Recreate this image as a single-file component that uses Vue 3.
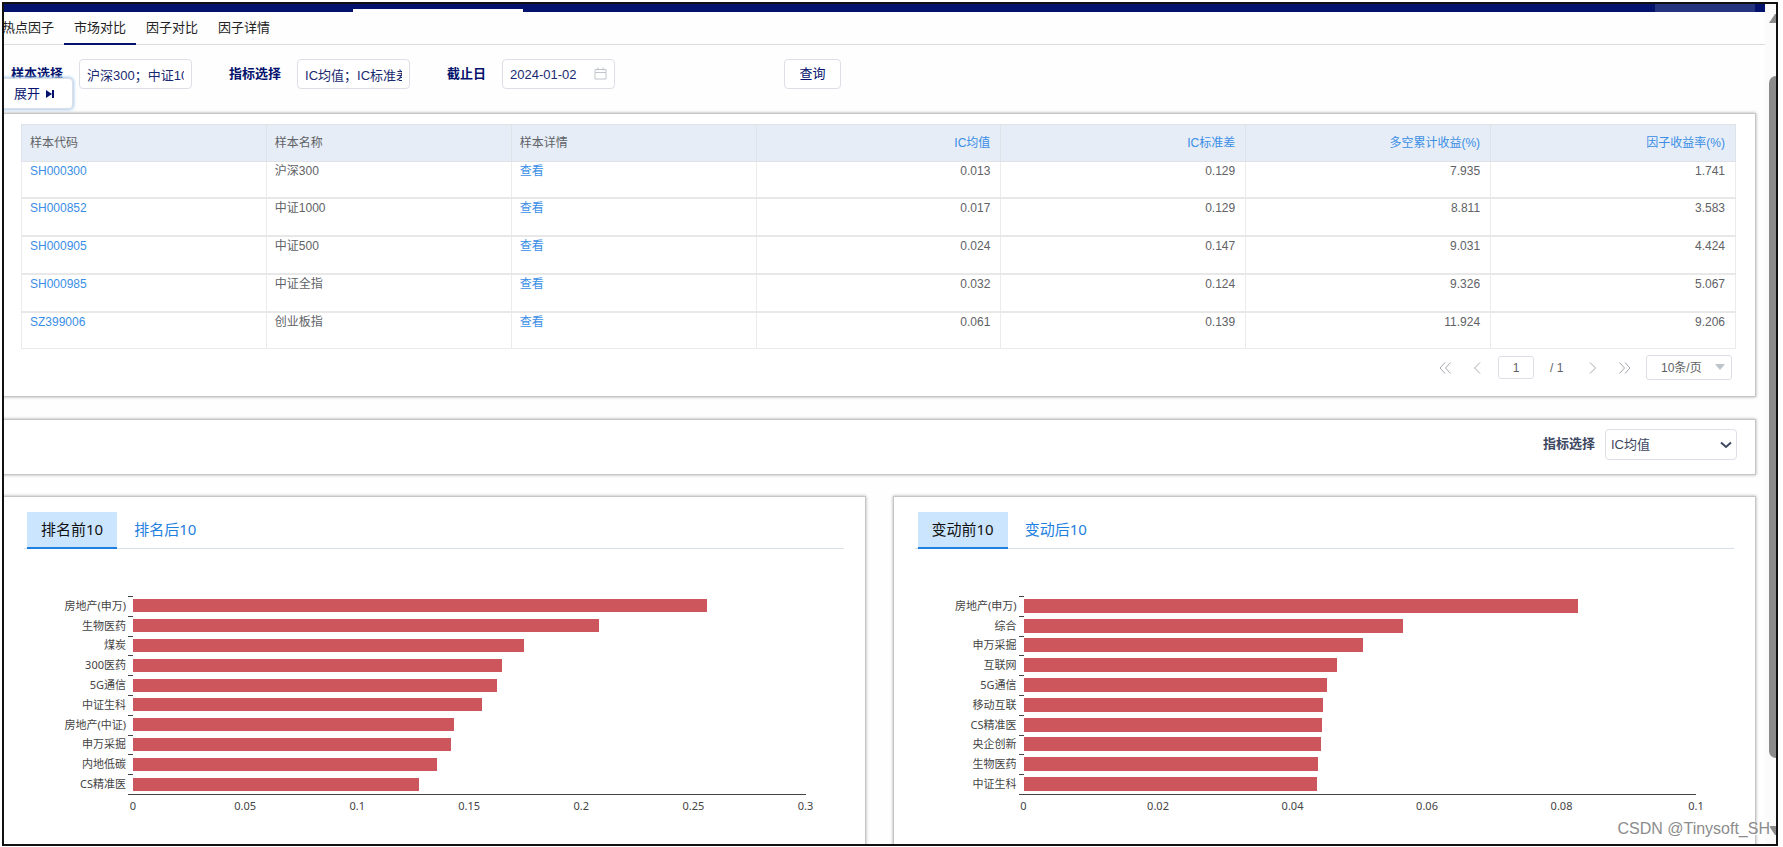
<script setup>
import { ref } from 'vue'

const navTabs = ['热点因子', '市场对比', '因子对比', '因子详情']
const activeNav = ref(1)

const samples = ref('沪深300；中证1000；中证500；中证全指；创业板指')
const metrics = ref('IC均值；IC标准差；多空累计收益；因子收益率')
const endDate = ref('2024-01-02')
const metric = ref('IC均值')
const page = ref('1')
const pageSize = ref('10')

const headers = [
  { text: '样本代码' },
  { text: '样本名称' },
  { text: '样本详情' },
  { text: 'IC均值', num: true },
  { text: 'IC标准差', num: true },
  { text: '多空累计收益(%)', num: true },
  { text: '因子收益率(%)', num: true },
]

const rows = [
  { code: 'SH000300', name: '沪深300', values: ['0.013', '0.129', '7.935', '1.741'] },
  { code: 'SH000852', name: '中证1000', values: ['0.017', '0.129', '8.811', '3.583'] },
  { code: 'SH000905', name: '中证500', values: ['0.024', '0.147', '9.031', '4.424'] },
  { code: 'SH000985', name: '中证全指', values: ['0.032', '0.124', '9.326', '5.067'] },
  { code: 'SZ399006', name: '创业板指', values: ['0.061', '0.139', '11.924', '9.206'] },
]

const charts = [
  {
    id: 'rank',
    tabs: ['排名前10', '排名后10'],
    max: 0.3,
    ticks: ['0', '0.05', '0.1', '0.15', '0.2', '0.25', '0.3'],
    bars: [
      ['房地产(申万)', 0.256],
      ['生物医药', 0.2077],
      ['煤炭', 0.1746],
      ['300医药', 0.1646],
      ['5G通信', 0.1623],
      ['中证生科', 0.1558],
      ['房地产(中证)', 0.1431],
      ['申万采掘', 0.1419],
      ['内地低碳', 0.1356],
      ['CS精准医', 0.1275],
    ],
  },
  {
    id: 'change',
    tabs: ['变动前10', '变动后10'],
    max: 0.1,
    ticks: ['0', '0.02', '0.04', '0.06', '0.08', '0.1'],
    bars: [
      ['房地产(申万)', 0.0824],
      ['综合', 0.0565],
      ['申万采掘', 0.0505],
      ['互联网', 0.0466],
      ['5G通信', 0.0452],
      ['移动互联', 0.0445],
      ['CS精准医', 0.0444],
      ['央企创新', 0.0442],
      ['生物医药', 0.0438],
      ['中证生科', 0.0436],
    ],
  },
]
</script>

<template>
  <div class="frame">
    <div class="content">
      <div class="topbar">
        <span class="topbar-tab"></span>
        <span class="topbar-user"></span>
      </div>

      <nav class="nav">
        <a
          v-for="(t, i) in navTabs"
          :key="t"
          href="#"
          class="nav-item"
          :class="{ active: i === activeNav }"
          @click.prevent="activeNav = i"
        >{{ t }}</a>
      </nav>

      <form class="filters" @submit.prevent>
        <div class="field">
          <label for="samples">样本选择</label>
          <input id="samples" v-model="samples" type="text" class="box" />
        </div>
        <div class="field">
          <label for="metrics">指标选择</label>
          <input id="metrics" v-model="metrics" type="text" class="box" />
        </div>
        <div class="field">
          <label for="end-date">截止日</label>
          <div class="date">
            <input id="end-date" v-model="endDate" type="text" class="box" />
            <svg class="calendar" width="13" height="13" viewBox="0 0 13 13" aria-hidden="true">
              <path d="M1 2.5h11v9.5h-11zM1 5.5h11M4 0.5v3M9 0.5v3" fill="none" stroke="#c0c4cc" />
            </svg>
          </div>
        </div>
        <button type="submit" class="query">查询</button>
        <button type="button" class="expand">
          展开
          <svg width="9" height="8" viewBox="0 0 9 8" aria-hidden="true">
            <path d="M0 0l6 4l-6 4zM6 0h2v8h-2z" fill="#03126c" />
          </svg>
        </button>
      </form>

      <section class="panel table-panel">
        <table>
          <thead>
            <tr>
              <th v-for="h in headers" :key="h.text" scope="col" :class="{ num: h.num }">{{ h.text }}</th>
            </tr>
          </thead>
          <tbody>
            <tr v-for="r in rows" :key="r.code">
              <td><a href="#" @click.prevent>{{ r.code }}</a></td>
              <td>{{ r.name }}</td>
              <td><a href="#" @click.prevent>查看</a></td>
              <td v-for="(v, i) in r.values" :key="i" class="num">{{ v }}</td>
            </tr>
          </tbody>
        </table>

        <div class="pager">
          <button type="button" aria-label="第一页" class="arrow">
            <svg width="12" height="12" viewBox="0 0 12 12"><path d="M6 0.5l-5 5.5l5 5.5M11.5 0.5l-5 5.5l5 5.5" /></svg>
          </button>
          <button type="button" aria-label="上一页" class="arrow near">
            <svg width="12" height="12" viewBox="0 0 12 12"><path d="M9 0.5l-5.5 5.5l5.5 5.5" /></svg>
          </button>
          <input v-model="page" type="text" class="page-no" aria-label="页码" />
          <span class="total">/ 1</span>
          <button type="button" aria-label="下一页" class="arrow">
            <svg width="12" height="12" viewBox="0 0 12 12"><path d="M3 0.5l5.5 5.5l-5.5 5.5" /></svg>
          </button>
          <button type="button" aria-label="最后一页" class="arrow near">
            <svg width="12" height="12" viewBox="0 0 12 12"><path d="M0.5 0.5l5 5.5l-5 5.5M6 0.5l5 5.5l-5 5.5" /></svg>
          </button>
          <div class="size">
            <select v-model="pageSize" aria-label="每页条数">
              <option value="10">10条/页</option>
              <option value="20">20条/页</option>
            </select>
            <svg width="10" height="6" viewBox="0 0 10 6" aria-hidden="true"><path d="M0 0h10l-5 6z" fill="#c0c4cc" /></svg>
          </div>
        </div>
      </section>

      <section class="panel metric-panel">
        <label for="metric">指标选择</label>
        <div class="metric">
          <select id="metric" v-model="metric">
            <option>IC均值</option>
            <option>IC标准差</option>
          </select>
          <svg width="12" height="8" viewBox="0 0 12 8" aria-hidden="true">
            <path d="M1 1.5l5 4.5l5-4.5" fill="none" stroke="#3d4760" stroke-width="2" />
          </svg>
        </div>
      </section>

      <div class="charts">
        <section v-for="c in charts" :key="c.id" class="panel chart-panel">
          <div class="chart-tabs">
            <button v-for="(t, i) in c.tabs" :key="t" type="button" :class="{ active: i === 0 }">{{ t }}</button>
          </div>
          <div class="chart" :class="c.id">
            <div class="plot">
              <div v-for="b in c.bars" :key="b[0]" class="bar-row">
                <span class="bar-label">{{ b[0] }}</span>
                <i class="tick"></i>
                <div class="track">
                  <div class="bar" :style="{ width: (b[1] / c.max) * 100 + '%' }"></div>
                </div>
              </div>
            </div>
            <div class="axis">
              <span v-for="t in c.ticks" :key="t">{{ t }}</span>
            </div>
          </div>
        </section>
      </div>
    </div>

    <div class="scrollbar">
      <svg width="14" height="24" viewBox="0 0 14 24" aria-hidden="true"><path d="M0 19l6-9h2l6 9z" fill="#8b8b8b" /></svg>
      <div class="space-top"></div>
      <div class="thumb"></div>
      <div class="space-bottom"></div>
      <svg width="14" height="24" viewBox="0 0 14 24" aria-hidden="true"><path d="M0 6l6 9h2l6-9z" fill="#8b8b8b" /></svg>
    </div>

    <span class="watermark">CSDN @Tinysoft_SH</span>
  </div>
</template>

<style>
body {
  background: #fff;
  overflow: hidden;
}
</style>

<style scoped>
.frame,
.frame * {
  box-sizing: border-box;
}

.frame {
  position: relative;
  display: flex;
  height: calc(100vh - 3px);
  margin: 2px 5px 0 2px;
  border: 2px solid #111;
  overflow: hidden;
  background: #fefefe;
  color: #606266;
  font: 12px/18px "Liberation Sans", "Noto Sans CJK SC", sans-serif;
}

button,
input,
select {
  margin: 0;
  font: inherit;
  color: inherit;
  outline: none;
}

button {
  cursor: pointer;
}

a {
  color: #3a8ee6;
  text-decoration: none;
}

.content {
  flex: 1;
  min-width: 0;
  display: flex;
  flex-direction: column;
}

/* top bar */
.topbar {
  flex: none;
  display: flex;
  justify-content: space-between;
  align-items: flex-end;
  height: 8px;
  background: #03126c;
}

.topbar-tab {
  width: 170px;
  height: 3px;
  margin-left: 349px;
  background: #fff;
}

.topbar-user {
  width: 100px;
  height: 8px;
  margin-right: 10px;
  background: #26347f;
}

/* page tabs */
.nav {
  flex: none;
  display: flex;
  height: 33px;
  border-bottom: 1px solid #dcdcdc;
}

.nav-item {
  padding: 0 10px;
  height: 33px;
  border-bottom: 2px solid transparent;
  font-size: 13px;
  line-height: 32px;
  color: #222;
}

.nav-item:first-child {
  margin-left: -12px;
}

.nav-item.active {
  border-bottom-color: #03126c;
}

/* filters */
.filters {
  flex: none;
  position: relative;
  display: flex;
  align-items: flex-start;
  height: 68px;
  padding: 14px 0 0 7px;
  color: #1a2a70;
  font-size: 13px;
}

.field {
  display: flex;
  align-items: center;
  gap: 16px;
  margin-right: 37px;
}

.field label {
  font-weight: 700;
  line-height: 30px;
  color: #03126c;
}

.box {
  display: block;
  width: 113px;
  height: 30px;
  padding: 0 7px;
  border: 1px solid #dcdfe6;
  border-radius: 4px;
  background: #fff;
}

.date {
  position: relative;
}

.calendar {
  position: absolute;
  right: 8px;
  top: 8px;
}

.query {
  width: 57px;
  height: 30px;
  margin-left: 132px;
  padding: 0;
  border: 1px solid #dcdfe6;
  border-radius: 4px;
  background: #fff;
  color: #03126c;
}

.expand {
  position: absolute;
  left: -6px;
  top: 33px;
  display: flex;
  align-items: center;
  gap: 6px;
  width: 75px;
  height: 31px;
  padding: 0 15px;
  border: 1px solid #dcdfe6;
  border-radius: 4px;
  background: #fff;
  box-shadow: 0 0 3px 1px #a9cdf0;
  color: #03126c;
}

/* panels */
.panel {
  flex: none;
  margin: 0 9px 22px -2px;
  border: 1px solid #c6c6c6;
  box-shadow: 0 0 3px #aaa;
  background: #fff;
}

.table-panel {
  padding: 10px 19px 16px 18px;
}

table {
  width: 100%;
  height: 225px;
  table-layout: fixed;
  border-collapse: collapse;
  border: 1px solid #e6e9ee;
}

th {
  height: 37px;
  padding: 0 10px 0 8px;
  border: 1px solid #dfe3e8;
  background: #e6edf6;
  font-weight: 400;
  text-align: left;
}

th.num {
  color: #3a8ee6;
}

td {
  padding: 0 10px 0 8px;
  border: 1px solid #ebebeb;
  border-top: 2px solid #e8e8e8;
  vertical-align: top;
}

tbody tr:first-child td {
  border-top: 1px solid #ebebeb;
}

th.num,
td.num {
  text-align: right;
}

/* pagination */
.pager {
  display: flex;
  align-items: center;
  justify-content: flex-end;
  height: 25px;
  margin: 6px 4px 0 0;
}

.arrow {
  width: 12px;
  height: 20px;
  margin-right: 20px;
  padding: 0;
  border: 0;
  background: none;
  line-height: 0;
}

.arrow.near {
  margin-right: 15px;
}

.arrow path {
  fill: none;
  stroke: #a4a8af;
  stroke-width: 1;
}

.page-no {
  width: 36px;
  height: 23px;
  padding: 0;
  border: 1px solid #dcdfe6;
  border-radius: 3px;
  background: #fff;
  text-align: center;
}

.total {
  width: 53px;
  padding-left: 16px;
}

.size {
  position: relative;
}

.size select {
  display: block;
  width: 86px;
  height: 25px;
  padding: 0 0 0 14px;
  border: 1px solid #dcdfe6;
  border-radius: 3px;
  background: #fff;
  appearance: none;
}

.size svg {
  position: absolute;
  right: 7px;
  top: 9px;
}

/* metric selector */
.metric-panel {
  display: flex;
  align-items: flex-start;
  justify-content: flex-end;
  gap: 10px;
  height: 56px;
  padding: 9px 18px 0 0;
  color: #3d4760;
  font-size: 13px;
}

.metric-panel label {
  font-weight: 600;
  line-height: 30px;
}

.metric {
  position: relative;
}

.metric select {
  display: block;
  width: 132px;
  height: 31px;
  padding: 0 0 0 5px;
  border: 1px solid #dcdfe6;
  border-radius: 4px;
  background: #fff;
  appearance: none;
}

.metric svg {
  position: absolute;
  right: 5px;
  top: 12px;
}

/* charts */
.charts {
  flex: 1;
  display: grid;
  grid-template-columns: 1fr 1fr;
  gap: 27px;
  margin: -1px 9px 0 -2px;
}

.chart-panel {
  margin: 0 0 -8px;
  padding: 15px 21px 0;
}

.chart-tabs {
  display: flex;
  gap: 3px;
  height: 37px;
  padding-left: 3px;
  border-bottom: 1px solid #d8dee6;
}

.chart-tabs button {
  height: 37px;
  padding: 0 14px;
  border: 0;
  border-bottom: 2px solid transparent;
  background: none;
  color: #1e80e0;
  font: 15px/35px "Noto Sans", "Noto Sans CJK SC", sans-serif;
}

.chart-tabs button.active {
  border-bottom-color: #1e80e0;
  background: #cce5ff;
  color: #111;
}

.chart {
  margin: 47px 38px 0 0;
  color: #444;
  font: 11px/14px "Noto Sans", "Noto Sans CJK SC", sans-serif;
}

.plot {
  display: flex;
  flex-direction: column;
  height: 198px;
}

.bar-row {
  flex: 1;
  display: flex;
  align-items: center;
}

.bar-label {
  width: 102px;
  margin-right: 2px;
  text-align: right;
  white-space: nowrap;
}

.tick {
  align-self: flex-start;
  width: 5px;
  height: 1px;
  background: #444;
}

.track {
  flex: 1;
}

.bar {
  height: 13px;
  background: #cd565c;
}

.change .bar {
  height: 14px;
}

.axis {
  display: flex;
  justify-content: space-between;
  margin-left: 104px;
  padding: 4px 0 0 5px;
  border-top: 1px solid #444;
}

.axis span {
  display: flex;
  justify-content: center;
  width: 0;
}

/* window scrollbar */
.scrollbar {
  flex: none;
  display: flex;
  flex-direction: column;
  width: 11px;
  padding-left: 4px;
  overflow: hidden;
  background: #fbfbfb;
}

.scrollbar svg {
  flex: none;
}

.thumb {
  flex: 681;
  width: 14px;
  border-radius: 7px;
  background: #8b8b8b;
}

.space-top {
  flex: 48;
}

.space-bottom {
  flex: 62;
}

.watermark {
  position: absolute;
  right: 6px;
  bottom: 6px;
  color: #8c8c8c;
  font-size: 16px;
  text-shadow: 1px 1px 1px #fff;
}
</style>
